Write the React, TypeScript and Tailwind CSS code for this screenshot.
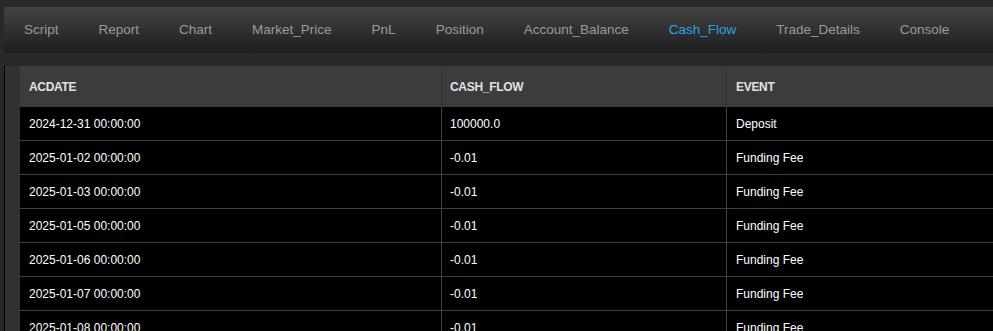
const tabs = ['Script', 'Report', 'Chart', 'Market_Price', 'PnL', 'Position', 'Account_Balance', 'Cash_Flow', 'Trade_Details', 'Console']

const rows = [
  { acdate: '2024-12-31 00:00:00', cash: '100000.0', event: 'Deposit' },
  { acdate: '2025-01-02 00:00:00', cash: '-0.01', event: 'Funding Fee' },
  { acdate: '2025-01-03 00:00:00', cash: '-0.01', event: 'Funding Fee' },
  { acdate: '2025-01-05 00:00:00', cash: '-0.01', event: 'Funding Fee' },
  { acdate: '2025-01-06 00:00:00', cash: '-0.01', event: 'Funding Fee' },
  { acdate: '2025-01-07 00:00:00', cash: '-0.01', event: 'Funding Fee' },
  { acdate: '2025-01-08 00:00:00', cash: '-0.01', event: 'Funding Fee' },
]

export default function App() {
  return (
    <div className="w-[993px] h-[331px] overflow-hidden bg-[#292929] font-['Liberation_Sans',Arial,sans-serif]">
      {/* TAB BAR */}
      <div className="pt-[7px] pl-[4px]">
        <div className="flex h-[46px] items-center bg-gradient-to-b from-[#434343] to-[#1e1e1e]">
          {tabs.map((tab) => (
            <div
              key={tab}
              className={`px-[20px] text-[13.5px] leading-none ${tab === 'Cash_Flow' ? 'text-[#2ea3e6]' : 'text-[#9b9b9b]'}`}
            >
              {tab}
            </div>
          ))}
        </div>
      </div>

      {/* TABLE AREA */}
      <div className="flex mt-[13px] pl-[4px]">
        <div className="w-px bg-black shrink-0" />
        <div className="w-[15px] bg-[#323232] shrink-0" />
        <div className="flex-1 min-w-0">
          <div className="flex h-[41px] bg-[#3c3c3c] text-[12px] text-[#e2e2e2] font-bold tracking-[-0.3px]">
            <div className="w-[422px] shrink-0 flex items-center pl-[9px] border-r border-[#333]">ACDATE</div>
            <div className="w-[285px] shrink-0 flex items-center pl-[8px] border-r border-[#333]">CASH_FLOW</div>
            <div className="flex-1 flex items-center pl-[9px]">EVENT</div>
          </div>
          {rows.map((r) => (
            <div key={r.acdate} className="flex h-[34px] bg-black border-b border-[#3f3f3f] text-[12px] text-white">
              <div className="w-[422px] shrink-0 flex items-center pl-[9px] border-r border-[#444]">{r.acdate}</div>
              <div className="w-[285px] shrink-0 flex items-center pl-[8px] border-r border-[#444]">{r.cash}</div>
              <div className="flex-1 flex items-center pl-[9px]">{r.event}</div>
            </div>
          ))}
        </div>
      </div>
    </div>
  )
}
